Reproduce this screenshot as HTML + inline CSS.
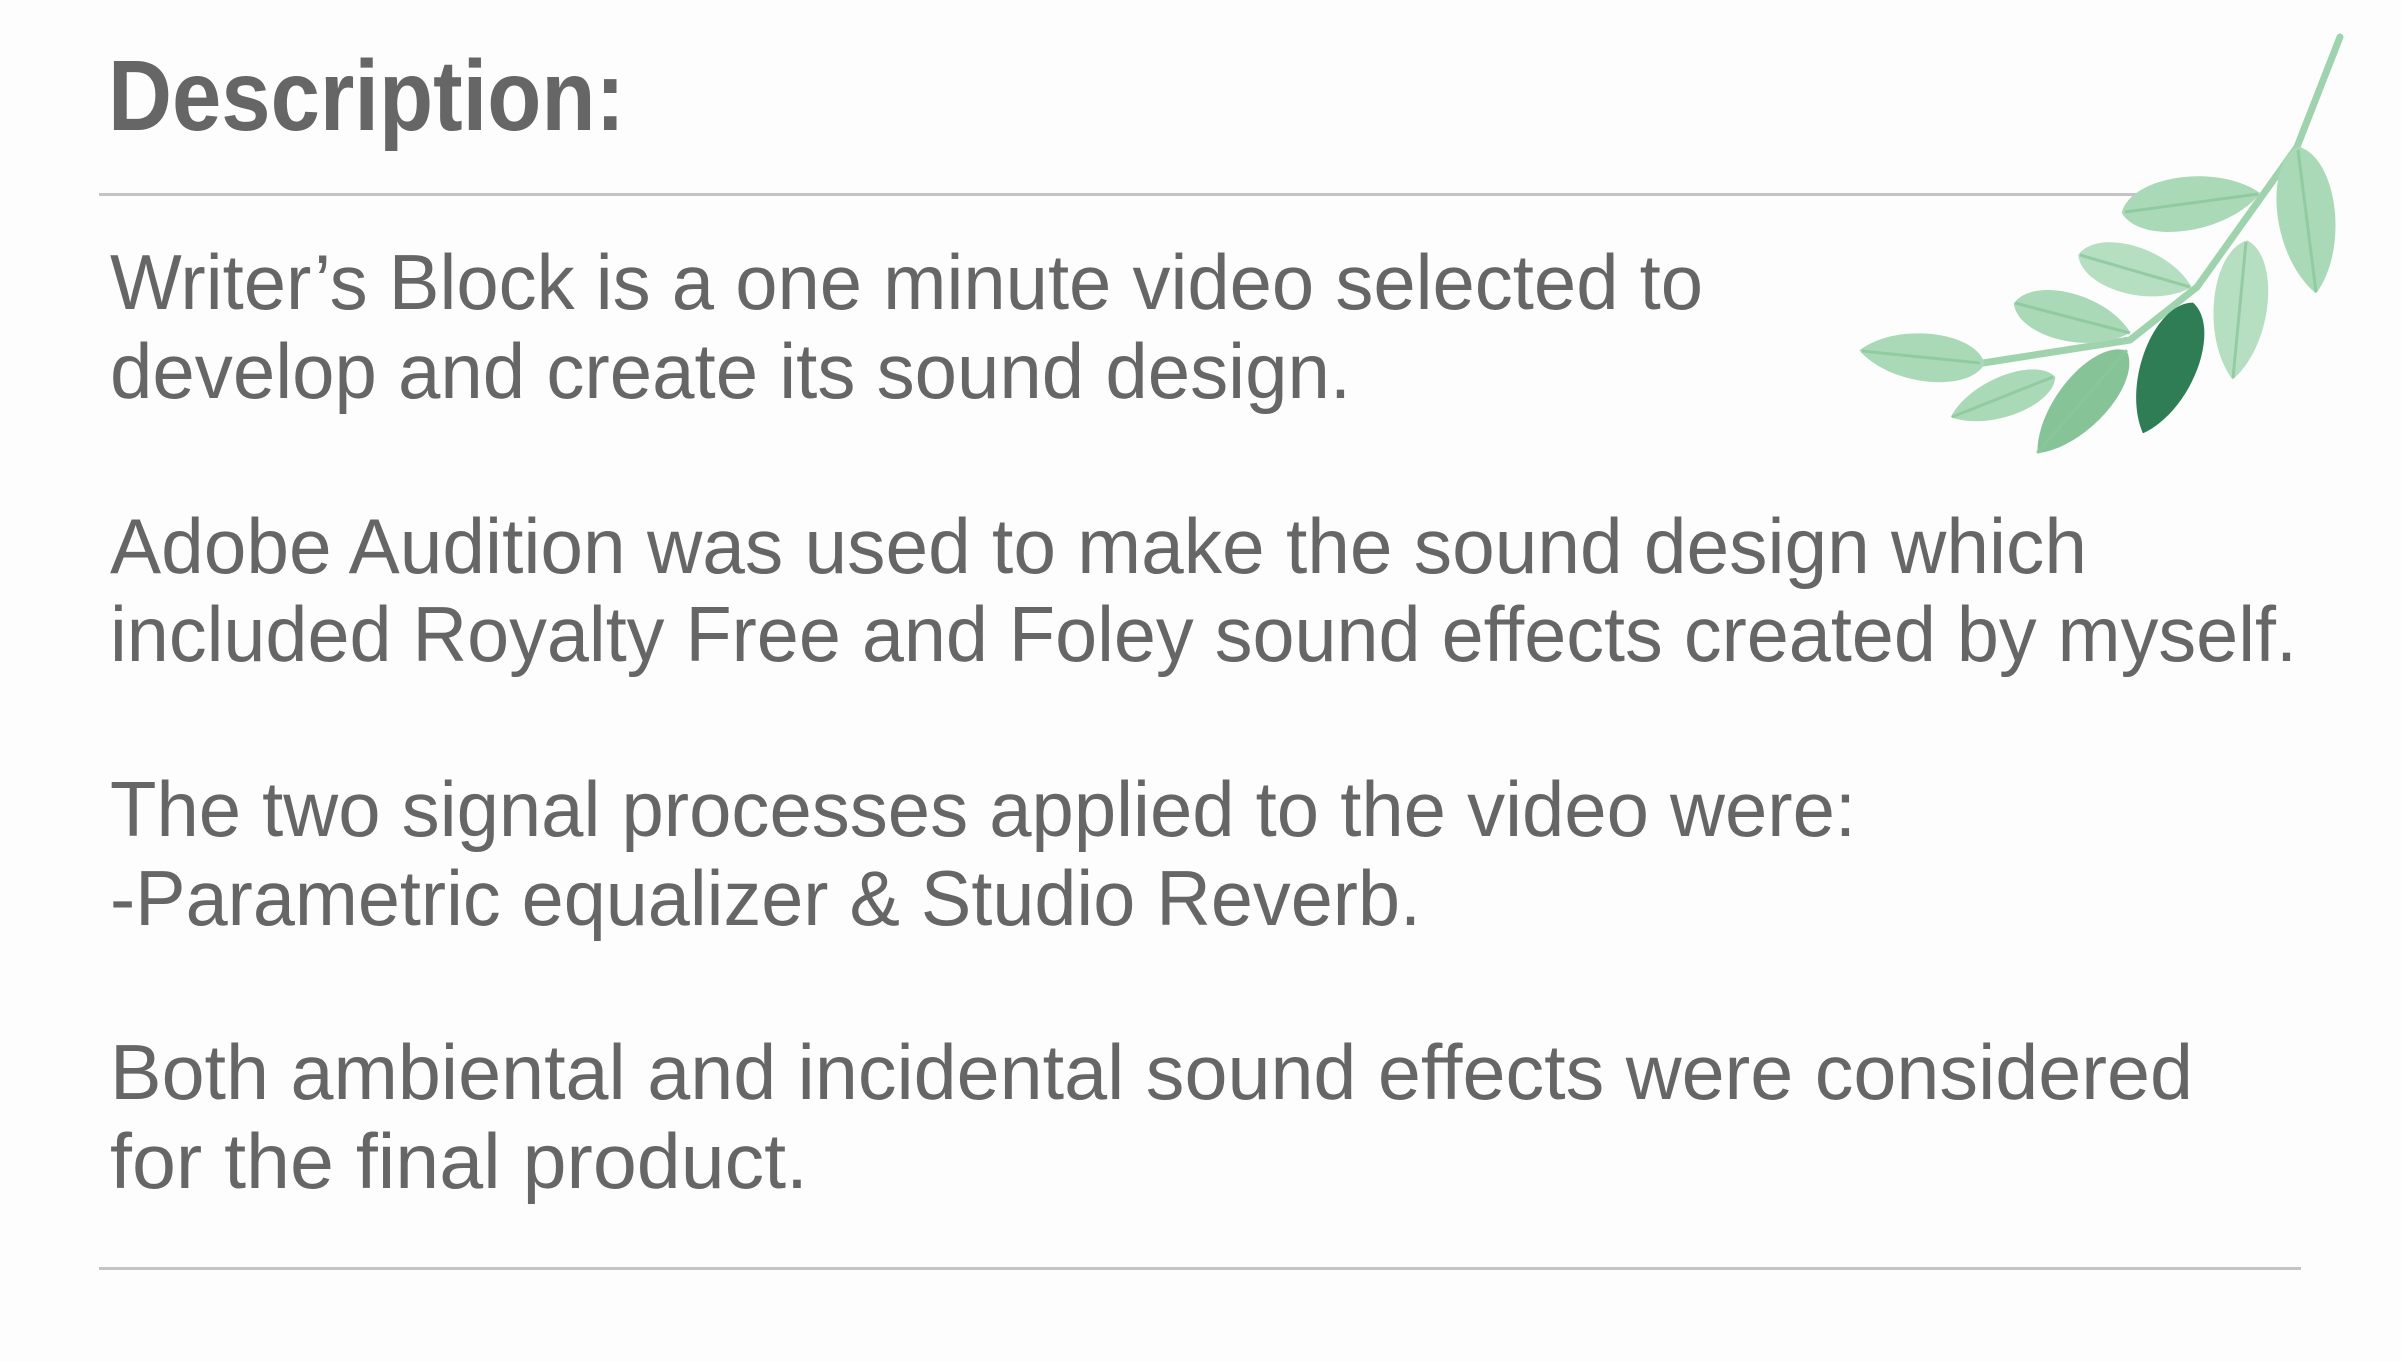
<!DOCTYPE html>
<html><head><meta charset="utf-8"><style>
html,body{margin:0;padding:0;background:#fdfdfd;}
svg{display:block;}
</style></head><body>
<svg width="2401" height="1361" viewBox="0 0 2401 1361" xmlns="http://www.w3.org/2000/svg">
<defs>
<path id="lf" d="M-1 0 C-0.8 -1.25 0.45 -1.3 1 0 C0.45 1.3 -0.8 1.25 -1 0Z"/>
</defs>
<rect width="2401" height="1361" fill="#fdfdfd"/>
<g fill="#666666" font-family="'Liberation Sans', sans-serif">
<text x="108" y="130" font-size="100" font-weight="bold" textLength="517" lengthAdjust="spacingAndGlyphs">Description:</text>
<g font-size="78">
<text x="110" y="309" textLength="1593" lengthAdjust="spacingAndGlyphs">Writer’s Block is a one minute video selected to</text>
<text x="110" y="398" textLength="1241" lengthAdjust="spacingAndGlyphs">develop and create its sound design.</text>
<text x="110" y="573" textLength="1977" lengthAdjust="spacingAndGlyphs">Adobe Audition was used to make the sound design which</text>
<text x="110" y="661" textLength="2187" lengthAdjust="spacingAndGlyphs">included Royalty Free and Foley sound effects created by myself.</text>
<text x="110" y="836" textLength="1746" lengthAdjust="spacingAndGlyphs">The two signal processes applied to the video were:</text>
<text x="110" y="925" textLength="1311" lengthAdjust="spacingAndGlyphs">-Parametric equalizer &amp; Studio Reverb.</text>
<text x="110" y="1099" textLength="2083" lengthAdjust="spacingAndGlyphs">Both ambiental and incidental sound effects were considered</text>
<text x="110" y="1188" textLength="698" lengthAdjust="spacingAndGlyphs">for the final product.</text>
</g>
</g>
<rect x="99" y="193" width="2080" height="3" fill="#c4c4c4"/>
<rect x="99" y="1267" width="2202" height="3" fill="#c4c4c4"/>
<g>
<path d="M2340 37 L2297 147 L2197 287 L2130 340 L1983 363" stroke="#9fd3ad" stroke-width="7" fill="none" stroke-linecap="round"/>
<g fill="#a9d9b6">
<use href="#lf" transform="translate(2191 203) rotate(-8) scale(70 28)"/>
<use href="#lf" transform="translate(2307 220) rotate(83) scale(74 30)"/>
<use href="#lf" transform="translate(2135 271) rotate(16) scale(59 25)" fill="#b5dfc0"/>
<use href="#lf" transform="translate(2240 310) rotate(96) scale(70 28)" fill="#b5dfc0"/>
<use href="#lf" transform="translate(2072 318) rotate(14) scale(60 25)"/>
<use href="#lf" transform="translate(1922 357) rotate(186) scale(63 25)"/>
<use href="#lf" transform="translate(2003 397) rotate(159) scale(56 21)"/>
<use href="#lf" transform="translate(2082 402) rotate(131) scale(68 26)" fill="#86c497"/>
<use href="#lf" transform="translate(2168 368) rotate(111) scale(70 29)" fill="#2e7d55"/>
</g>
<g stroke="#8cc79d" stroke-width="3" fill="none" opacity="0.8">
<line x1="2125" y1="212" x2="2258" y2="194"/>
<line x1="2298" y1="150" x2="2316" y2="292"/>
<line x1="2080" y1="255" x2="2190" y2="287"/>
<line x1="2246" y1="242" x2="2233" y2="378"/>
<line x1="2015" y1="303" x2="2130" y2="333"/>
<line x1="1862" y1="351" x2="1980" y2="363"/>
<line x1="1952" y1="417" x2="2053" y2="377"/>
<line x1="2037" y1="453" x2="2127" y2="350"/>
</g>
</g>
</svg>
</body></html>
